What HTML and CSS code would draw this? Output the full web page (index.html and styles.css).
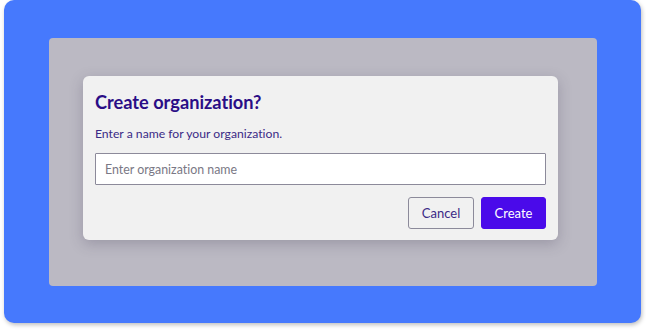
FILE: index.html
```html
<!DOCTYPE html>
<html>
<head>
<meta charset="utf-8">
<link rel="stylesheet" href="styles.css">
</head>
<body>
<div class="frame">
  <div class="overlay">
    <div class="dialog">
      <h1 class="title">Create organization?</h1>
      <p class="desc">Enter a name for your organization.</p>
      <input class="field" type="text" placeholder="Enter organization name">
      <div class="actions">
        <button class="btn btn-cancel">Cancel</button>
        <button class="btn btn-create">Create</button>
      </div>
    </div>
  </div>
</div>
</body>
</html>
```
FILE: styles.css
```css
* { box-sizing: border-box; }
html, body { margin: 0; padding: 0; background: #ffffff; }
body {
  font-family: Lato, "Noto Sans", sans-serif;
  font-variant-ligatures: none;
  width: 646px;
  height: 331px;
  overflow: hidden;
}
.frame {
  margin: 0 0 0 4px;
  width: 637px;
  height: 323px;
  background: #4679fd;
  border-radius: 10px;
  box-shadow: 1px 2px 4px rgba(0,0,0,0.25);
  padding: 38px 44px 37px 45px;
}
.overlay {
  width: 548px;
  height: 248px;
  background: #bbb9c3;
  border-radius: 4px;
  padding: 38px 39px 0 34px;
}
.dialog {
  width: 475px;
  height: 164px;
  background: #f1f1f1;
  border-radius: 6px;
  box-shadow: 0 4px 14px rgba(60,50,80,0.25);
  padding: 14px 12px 12px 12px;
}
.title {
  margin: 0;
  font-size: 18.2px;
  font-weight: 700;
  color: #2a0d86;
  line-height: 24px;
}
.desc {
  margin: 12px 0 0 0;
  font-size: 12.2px;
  color: #3b2a86;
  line-height: 16px;
}
.field {
  display: block;
  margin-top: 11px;
  width: 451px;
  height: 32px;
  border: 1px solid #8c8a9a;
  border-radius: 1px;
  background: #ffffff;
  font-family: Lato, "Noto Sans", sans-serif;
  font-variant-ligatures: none;
  font-size: 12.4px;
  padding: 0 9px;
  outline: none;
}
.field::placeholder { color: #7a7885; }
.actions {
  display: flex;
  justify-content: flex-end;
  gap: 7px;
  margin-top: 12px;
}
.btn {
  height: 32px;
  border-radius: 3px;
  font-family: Lato, "Noto Sans", sans-serif;
  font-size: 13px;
  padding: 0;
}
.btn-cancel {
  width: 66px;
  background: #f1f1f1;
  border: 1px solid #8c8a9a;
  color: #3b2a86;
}
.btn-create {
  width: 65px;
  background: #4a0aea;
  border: 1px solid #4a0aea;
  color: #ffffff;
}
```
